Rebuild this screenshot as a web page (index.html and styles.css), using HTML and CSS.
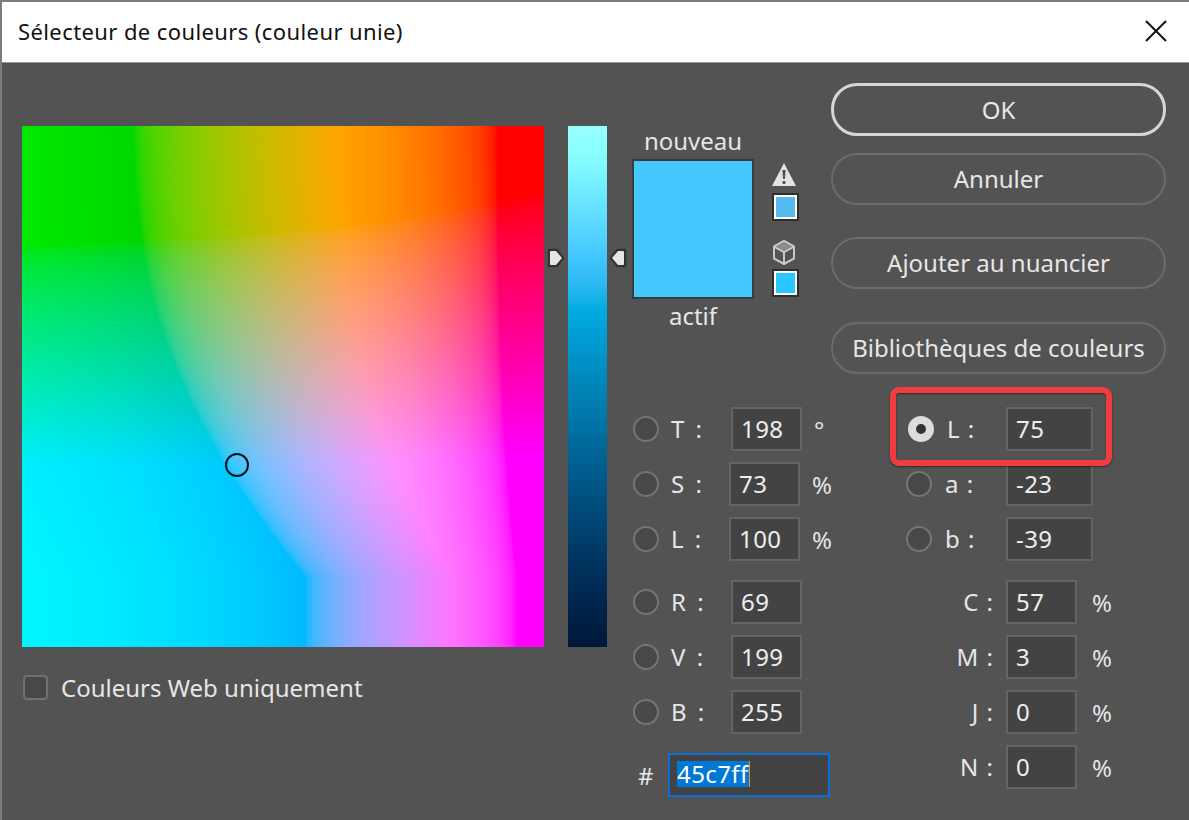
FILE: index.html
```html
<!DOCTYPE html>
<html lang="fr">
<head>
  <meta charset="UTF-8" />
  <title>Sélecteur de couleurs</title>
  <link rel="stylesheet" href="styles.css">
</head>
<body>
  <div class="dialog">
    <div class="titlebar">
      <span class="title">Sélecteur de couleurs (couleur unie)</span>
      <svg class="close" width="24" height="22" viewBox="0 0 24 22"><path d="M2 1 L22 21 M22 1 L2 21" stroke="#111" stroke-width="2" fill="none"/></svg>
    </div>

    <div class="content">
      <div class="picker-col">
        <canvas id="field" width="522" height="521"></canvas>
        <span class="marker"></span>
        <div class="web-only">
          <span class="checkbox"></span>
          <span>Couleurs Web uniquement</span>
        </div>
      </div>

      <div class="slider-col">
        <canvas id="slider" width="39" height="521"></canvas>
        <svg class="arrow arrow-left" width="18" height="20" viewBox="0 0 18 20"><path d="M1.5 1.5 H10 L16.5 10 L10 18.5 H1.5 Z" fill="#333" stroke="#333" stroke-width="1.5" stroke-linejoin="round"/><path d="M3 4 Q3 3 4 3 H9 L15 10 L9 17 H4 Q3 17 3 16 Z" fill="#e6e6e6"/></svg>
        <svg class="arrow arrow-right" width="18" height="20" viewBox="0 0 18 20"><path d="M16.5 1.5 H8 L1.5 10 L8 18.5 H16.5 Z" fill="#333" stroke="#333" stroke-width="1.5" stroke-linejoin="round"/><path d="M15 4 Q15 3 14 3 H9 L3 10 L9 17 H14 Q15 17 15 16 Z" fill="#e6e6e6"/></svg>
      </div>

      <div class="right-col">
        <div class="top">
          <div class="preview-col">
            <div class="preview">
              <div class="preview-label">nouveau</div>
              <div class="preview-box"></div>
              <div class="preview-label">actif</div>
            </div>
            <div class="gamut">
              <svg class="gamut-icon warn" width="26" height="25" viewBox="0 0 26 25"><path fill-rule="evenodd" d="M13 1 L25 24 H1 Z M11.4 8 L12 17 H14 L14.6 8 Z M11.6 19 V22 H14.4 V19 Z" fill="#e2e2e2"/></svg>
              <span class="mini-swatch mini-web"></span>
              <svg class="gamut-icon cube" width="26" height="27" viewBox="0 0 26 27"><g fill="none" stroke="#c8c8c8" stroke-width="2" stroke-linejoin="round"><path d="M13 2 L23 7.5 V19.5 L13 25 L3 19.5 V7.5 Z"/><path d="M3 7.5 L13 13 L23 7.5 M13 13 V25"/></g><path d="M13 3.5 L21 7.5 L13 12 L5 7.5 Z" fill="#8c8c8c"/></svg>
              <span class="mini-swatch mini-cube"></span>
            </div>
          </div>
          <div class="buttons">
            <div class="btn btn-ok">OK</div>
            <div class="btn btn-cancel">Annuler</div>
            <div class="btn btn-add">Ajouter au nuancier</div>
            <div class="btn btn-lib">Bibliothèques de couleurs</div>
          </div>
        </div>

        <div class="fields">
          <div class="fields-col">
            <div class="group">
              <div class="row"><span class="radio"></span><span class="label">T :</span><span class="input">198</span><span class="unit">°</span></div>
              <div class="row shift"><span class="radio"></span><span class="label">S :</span><span class="input">73</span><span class="unit">%</span></div>
              <div class="row shift"><span class="radio"></span><span class="label">L :</span><span class="input">100</span><span class="unit">%</span></div>
            </div>
            <div class="group">
              <div class="row"><span class="radio"></span><span class="label">R :</span><span class="input">69</span></div>
              <div class="row"><span class="radio"></span><span class="label">V :</span><span class="input">199</span></div>
              <div class="row"><span class="radio"></span><span class="label">B :</span><span class="input">255</span></div>
            </div>
            <div class="row hex-row">
              <span class="hash">#</span>
              <span class="input hex"><span class="selected">45c7ff</span><span class="caret"></span></span>
            </div>
          </div>

          <div class="fields-col lab-col">
            <div class="group">
              <div class="row row-active">
                <span class="radio radio-on"></span><span class="label">L :</span><span class="input wide">75</span>
                <span class="callout"></span>
              </div>
              <div class="row"><span class="radio"></span><span class="label">a :</span><span class="input wide">-23</span></div>
              <div class="row"><span class="radio"></span><span class="label">b :</span><span class="input wide">-39</span></div>
            </div>
            <div class="group">
              <div class="row cmyk"><span class="label">C :</span><span class="input">57</span><span class="unit">%</span></div>
              <div class="row cmyk"><span class="label">M :</span><span class="input">3</span><span class="unit">%</span></div>
              <div class="row cmyk"><span class="label">J :</span><span class="input">0</span><span class="unit">%</span></div>
              <div class="row cmyk"><span class="label">N :</span><span class="input">0</span><span class="unit">%</span></div>
            </div>
          </div>
        </div>
      </div>
    </div>
  </div>

  <script src="script.js"></script>
</body>
</html>
```

FILE: styles.css
```css
* {
  box-sizing: border-box;
}
html, body {
  margin: 0;
  height: 100%;
  overflow: hidden;
}
body {
  background: #535353;
  color: #e6e6e6;
  font-family: "Noto Sans", "Open Sans", sans-serif;
  font-size: 24px;
}
.dialog {
  width: 1189px;
  height: 820px;
  border-left: 2px solid #7c7c7c;
  border-top: 2px solid #7c7c7c;
  display: flex;
  flex-direction: column;
}
/* title bar */
.titlebar {
  height: 61px;
  flex: none;
  background: #fff;
  border-bottom: 1px solid #999;
  color: #111;
  display: flex;
  align-items: center;
  justify-content: space-between;
  padding: 0 21px 2px 16px;
  font-size: 22px;
  letter-spacing: 0.4px;
}
.content {
  flex: 1;
  display: flex;
}
/* colour field */
.picker-col {
  position: relative;
  margin-left: 20px;
  padding-top: 63px;
  width: 522px;
}
canvas {
  display: block;
}
.marker {
  position: absolute;
  left: 203px;
  top: 390px;
  width: 24px;
  height: 24px;
  border: 2px solid #05141c;
  border-radius: 50%;
}
.web-only {
  display: flex;
  align-items: center;
  gap: 13px;
  margin-top: 27px;
  height: 26px;
  padding-left: 1px;
}
.checkbox {
  width: 25px;
  height: 25px;
  background: #484848;
  border: 2px solid #707070;
  border-radius: 4px;
}
/* lightness slider */
.slider-col {
  position: relative;
  margin-left: 24px;
  padding-top: 63px;
  width: 39px;
}
.arrow {
  position: absolute;
  top: 185px;
}
.arrow-left {
  left: -21px;
}
.arrow-right {
  left: 41px;
}
/* right part */
.right-col {
  margin-left: 25px;
  width: 534px;
  position: relative;
}
.top {
  display: flex;
  height: 324px;
  padding-top: 20px;
}
.preview-col {
  width: 199px;
  display: flex;
  padding-top: 45px;
}
.preview {
  width: 122px;
  text-align: center;
}
.preview-label {
  height: 28px;
  line-height: 26px;
}
.preview-box {
  height: 140px;
  margin: 3px 0 4px;
  background: #45c7ff;
  border: 2px solid #3a3a3a;
}
.gamut {
  margin-left: 17px;
  display: flex;
  flex-direction: column;
}
.gamut-icon {
  display: block;
}
.warn {
  margin-top: 34px;
}
.cube {
  margin-top: 18px;
}
.mini-swatch {
  display: block;
  width: 27px;
  height: 28px;
  margin-left: 1px;
  margin-top: 6px;
  border: 2px solid #2e2e2e;
  outline: 2px solid #fff;
  outline-offset: -4px;
}
.mini-web {
  background: #55bbee;
}
.mini-cube {
  margin-top: 3px;
  background: #29c6ff;
}
.buttons {
  width: 335px;
}
.btn {
  height: 52px;
  border: 2px solid #6b6b6b;
  border-radius: 26px;
  display: flex;
  align-items: center;
  justify-content: center;
  padding-bottom: 1px;
}
.btn-ok {
  height: 53px;
  border: 3px solid #d6d6d6;
}
.btn-cancel {
  margin-top: 17px;
}
.btn-add {
  margin-top: 32px;
}
.btn-lib {
  margin-top: 33px;
}
/* value fields */
.fields {
  display: flex;
  margin-left: 1px;
  padding-top: 20px;
}
.fields-col {
  flex: none;
  width: 273px;
  display: flex;
  flex-direction: column;
  gap: 19px;
}
.group {
  display: flex;
  flex-direction: column;
  gap: 11px;
}
.row {
  display: flex;
  align-items: center;
  height: 44px;
}
.radio {
  flex: none;
  width: 26px;
  height: 26px;
  background: #484848;
  border: 2px solid #757575;
  border-radius: 50%;
}
.radio-on {
  background: #333;
  border: 8px solid #dcdcdc;
}
.label {
  width: 72px;
  padding-left: 12px;
  padding-bottom: 2px;
  word-spacing: 5px;
}
.shift .label {
  width: 70px;
}
.input {
  flex: none;
  width: 71px;
  height: 44px;
  background: #434343;
  border: 2px solid #646464;
  display: flex;
  align-items: center;
  padding: 0 0 2px 8px;
  color: #eee;
  letter-spacing: 0.4px;
}
.wide {
  width: 87px;
}
.unit {
  margin-left: 12px;
}
.hash {
  width: 35px;
  padding-left: 5px;
}
.hex {
  width: 162px;
  padding-left: 7px;
  border-color: #0a6fd8;
}
.selected {
  background: #0078d7;
  color: #fff;
  line-height: 26px;
}
.caret {
  width: 1px;
  height: 26px;
  background: #ff8c1a;
}
/* L row with the red frame over it */
.lab-col .label {
  width: 74px;
  padding-left: 13px;
  word-spacing: 2px;
}
.row-active {
  position: relative;
  padding-left: 2px;
}
.row-active .label {
  width: 72px;
}
.callout {
  position: absolute;
  left: -16px;
  top: -20px;
  width: 222px;
  height: 79px;
  border: 6px solid #f23b3e;
  border-radius: 9px;
  box-shadow: 0 1px 2px rgba(0, 0, 0, 0.5), inset 0 1px 2px rgba(0, 0, 0, 0.5);
}
.lab-col .cmyk .label {
  width: 100px;
  padding: 0 13px 2px 0;
  text-align: right;
}
.cmyk .unit {
  margin-left: 15px;
}
```

FILE: script.js
```js
// Lab -> sRGB, same slice as the dialog shows
function gamma(c) {
  c = Math.min(1, Math.max(0, c));
  return 255 * (c <= 0.0031308 ? 12.92 * c : 1.055 * Math.pow(c, 1 / 2.4) - 0.055);
}
function finv(t) {
  return t > 6 / 29 ? t * t * t : 3 * (6 / 29) * (6 / 29) * (t - 4 / 29);
}
function labToRgb(L, a, b) {
  const fy = (L + 16) / 116;
  const x = 0.9642 * finv(fy + a / 500);
  const y = finv(fy);
  const z = 0.8249 * finv(fy - b / 200);
  // D50 matrix
  const r = 3.1339 * x - 1.6170 * y - 0.4906 * z;
  const g = -0.9785 * x + 1.9160 * y + 0.0333 * z;
  const bl = 0.0720 * x - 0.2290 * y + 1.4057 * z;
  // greens come out a bit lighter where red is clipped
  return [gamma(r), gamma(g + (r < 0 ? -r * 0.07 : 0)), gamma(bl)];
}

function paint(id, fn) {
  const canvas = document.getElementById(id);
  const ctx = canvas.getContext('2d');
  const img = ctx.createImageData(canvas.width, canvas.height);
  for (let py = 0; py < canvas.height; py++) {
    for (let px = 0; px < canvas.width; px++) {
      const rgb = fn(px / (canvas.width - 1), py / (canvas.height - 1));
      const i = (py * canvas.width + px) * 4;
      img.data[i] = rgb[0];
      img.data[i + 1] = rgb[1];
      img.data[i + 2] = rgb[2];
      img.data[i + 3] = 255;
    }
  }
  ctx.putImageData(img, 0, 0);
}

// the dialog stops changing below b = -94
paint('field', (u, v) => labToRgb(75, -128 + u * 255, Math.max(-94, 127 - v * 255)));
paint('slider', (u, v) => labToRgb(100 - v * 100, -23, -39));
```
